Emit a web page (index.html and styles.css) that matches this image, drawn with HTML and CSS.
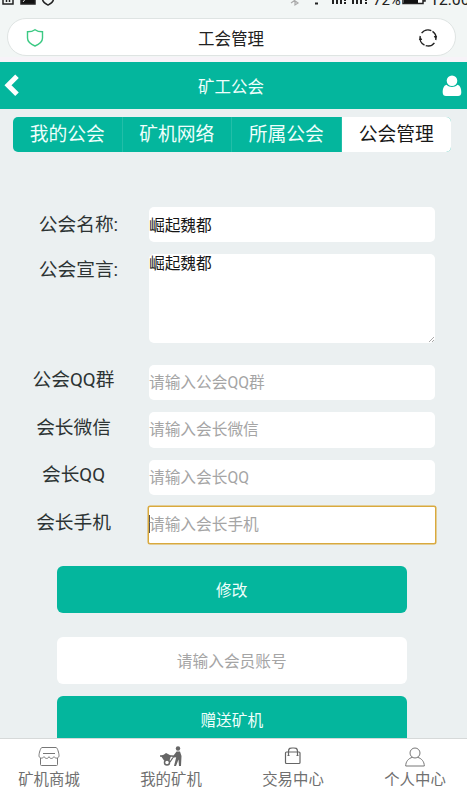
FILE: index.html
```html
<!DOCTYPE html>
<html lang="zh-CN">
<head>
<meta charset="utf-8">
<title>工会管理</title>
<link rel="stylesheet" href="styles.css">
</head>
<body>
<div class="browser">
  <div class="status">
    <svg class="status-left" width="56" height="18" viewBox="0 0 56 18" fill="none" stroke="#222" stroke-width="1.5">
      <path d="M1 3v10h10V3M4.500 5v6M7.500 5v6"/>
      <path d="M19 2h14v11H19z" fill="#111"/>
      <path d="M21 11l4-5 2 3 2-2" stroke="#ddd" stroke-width="1"/>
      <path d="M40.500 4v4c0 3.500 3.500 5 5.500 6 2-1 5.500-2.500 5.500-6V4"/>
    </svg>
    <svg class="status-signal" width="82" height="18" viewBox="0 0 82 18" fill="none" stroke="#222" stroke-width="2">
      <path d="M2 7l7 5-3 2V4M2 12l7-5" stroke="#aaa" stroke-width="1.200"/>
      <path d="M26 12.500h3"/>
      <path d="M44 8v5M48 7v6M52 5v8M56 8v2M56 11v2M64 8v5M68 7v6M72 5v8M77 8v2M77 11v2"/>
    </svg>
    <span class="percent">72%</span>
    <svg class="battery" width="24" height="18" viewBox="0 0 24 18"><path d="M1 3h20v9.500H1zM21 6h2v4h-2" fill="#fff" stroke="#222" stroke-width="1.500"/><path d="M2 3h14v9H2z" fill="#111"/></svg>
    <span class="clock">12:00</span>
  </div>
  <div class="address">
    <svg width="18" height="20" viewBox="0 0 18 20" fill="none" stroke="#3bc983" stroke-width="1.400"><path d="M9 1.700C7 3.200 4.500 3.800 1.500 3.800V10c0 4.200 3.500 6.300 7.500 8 4-1.700 7.500-3.800 7.500-8V3.800C13.500 3.800 11 3.200 9 1.700z"/></svg>
    <span>工会管理</span>
    <svg width="20" height="20" viewBox="0 0 20 20" fill="none" stroke="#222" stroke-width="1.400"><path d="M6.500 17.200A8 8 0 0 1 2.300 8M3.600 5.200A8 8 0 0 1 13.300 2.700M14.500 3.400A8 8 0 0 1 17.700 12M16.400 14.800a8 8 0 0 1-8.700 2.800"/><path d="M.8 12h3.400l-1.500-3zM15.800 8h3.400l-1.800 3z" fill="#222" stroke="none"/></svg>
  </div>
</div>
<header class="header">
  <svg width="16" height="24" viewBox="0 0 16 24" fill="none" stroke="#fff" stroke-width="5"><path d="M13 2.200L4 11.200 13 20.200"/></svg>
  <h1>矿工公会</h1>
  <svg width="20" height="22" viewBox="0 0 20 22" fill="#fff"><circle cx="10" cy="5.800" r="5.300"/><path d="M4.500 9.700C1.500 10.500.7 14 .7 17.500c0 2.500 1.300 3.500 3.300 3.500h12c2 0 3.300-1 3.300-3.500 0-3.500-.8-7-3.800-7.800-3 3-8 3-11 0z"/></svg>
</header>
<main class="content">
  <nav class="tabs">
    <span class="tab">我的公会</span><span class="tab">矿机网络</span><span class="tab">所属公会</span><span class="tab active">公会管理</span>
  </nav>
  <form class="form">
    <div class="row"><span class="label colon">公会名称:</span><div class="field value">崛起魏都</div></div>
    <div class="row tall"><span class="label colon">公会宣言:</span><div class="field value area">崛起魏都<svg class="grip" width="6" height="6" viewBox="0 0 6 6" stroke="#aaa" stroke-width="1"><path d="M0 5l5-5M3 5l2-2"/></svg></div></div>
    <div class="row"><span class="label">公会QQ群</span><div class="field">请输入公会QQ群</div></div>
    <div class="row"><span class="label">会长微信</span><div class="field">请输入会长微信</div></div>
    <div class="row"><span class="label">会长QQ</span><div class="field">请输入会长QQ</div></div>
    <div class="row"><span class="label">会长手机</span><div class="field focused">请输入会长手机</div></div>
  </form>
  <section class="actions">
    <div class="button">修改</div>
    <div class="member">请输入会员账号</div>
    <div class="button">赠送矿机</div>
  </section>
</main>
<footer class="bottom-nav">
  <a class="item"><svg width="22" height="20" viewBox="0 0 22 20" fill="none" stroke="#777" stroke-width="1"><path d="M4 1h14c1.500 0 3 6 3 8 0 3-3.500 3.500-5 1.200-1.500 2.300-4 2.300-5 0-1 2.300-3.500 2.300-5 0C4.500 12.500 1 12 1 9c0-2 1.500-8 3-8zM2.500 11.500V18q0 1 1 1h15q1 0 1-1v-6.500M5 7h12"/></svg><span>矿机商城</span></a>
  <a class="item"><svg width="22" height="21" viewBox="0 0 22 21" fill="#666"><path d="M1 10l3-1.500 2-1.500 3 1.500 2 1.500-1.500 4.500H4z"/><path d="M0 10h12l6 1M10 16l3-4.500" fill="none" stroke="#666" stroke-width="1.300"/><circle cx="7" cy="16.500" r="2.500" fill="#fff" stroke="#666" stroke-width="1.500"/><circle cx="18" cy="2.500" r="2.200"/><path d="M16.500 5.500h3.500l1.500 4.500-.5 10h-2l-.5-6.500-2.500 6.500h-2l2-8 .5-2-3 2-.8-1.300z"/></svg><span>我的矿机</span></a>
  <a class="item"><svg width="18" height="21" viewBox="0 -1 18 21" fill="none" stroke="#666" stroke-width="1.200"><rect x="1.500" y="5" width="14.500" height="11.500" rx="1"/><path d="M4.500 8.500V4.500C4.500.5 7 1 9 1s4.500-.5 4.500 3.500v4M3.500 8.500h2M12.500 8.500h2"/></svg><span>交易中心</span></a>
  <a class="item"><svg width="20" height="21" viewBox="0 -1 20 21" fill="none" stroke="#777" stroke-width="1"><circle cx="10" cy="6" r="5"/><path d="M7.500 10.300C3.500 11.300.7 14.500.7 19h18.600c0-4.500-2.800-7.700-6.800-8.700"/></svg><span>个人中心</span></a>
</footer>
</body>
</html>
```

FILE: styles.css
```css
* { box-sizing: border-box; }
body {
  margin: 0;
  height: 794px;
  overflow: hidden;
  display: flex;
  flex-direction: column;
  background: #ebf0f1;
  font-family: Roboto, "Noto Sans CJK SC", sans-serif;
  font-weight: 400;
  color: #2c3333;
}
svg { display: block; flex: none; }
.browser {
  flex: none;
  height: 62px;
  overflow: hidden;
  background: linear-gradient(#f2f6f5 57px, #f7f3f8 57px);
}
.status {
  display: flex;
  align-items: center;
  height: 18px;
  margin-top: -9px;
  padding-left: 2px;
  color: #222;
  font-size: 16px;
  line-height: 18px;
  white-space: nowrap;
}
.status-signal { margin-left: 231px; }
.percent { width: 29px; margin-left: 2px; font-size: 15px; }
.battery { margin-left: 1px; }
.clock { margin-left: 4px; }
.address {
  display: flex;
  align-items: center;
  justify-content: space-between;
  width: 449px;
  height: 38px;
  margin: 9px 0 0 7px;
  padding: 2px 17px 0 18px;
  border: 1px solid #dfe4e3;
  border-radius: 19px;
  background: #fff;
  color: #222;
  font-size: 16.5px;
}
.header {
  flex: none;
  display: flex;
  align-items: center;
  justify-content: space-between;
  height: 47px;
  padding: 0 5px 0 4px;
  background: #04b69d;
  color: #effffc;
}
.header h1 { margin: 0; font-size: 16.5px; font-weight: inherit; }
.content { flex: 1; min-height: 0; overflow: hidden; padding-top: 8px; }
.tabs {
  display: grid;
  grid-template-columns: repeat(4, 1fr);
  width: 438px;
  height: 35px;
  margin-left: 13px;
  border-radius: 5px;
  overflow: hidden;
  background: #04b69d;
}
.tab {
  display: flex;
  align-items: center;
  justify-content: center;
  padding-bottom: 4px;
  border-right: 1px solid #22bea8;
  color: #effffc;
  font-size: 18.8px;
}
.tab.active { border: 0; background: #fff; color: #181818; }
.form {
  display: flex;
  flex-direction: column;
  gap: 12px;
  margin: 55px 32.500px 0 0;
}
.row { display: grid; grid-template-columns: 149px 1fr; height: 35.500px; }
.row:first-child { height: 35px; }
.row.tall { height: 89px; margin-bottom: 9.500px; }
.label {
  display: flex;
  align-items: center;
  justify-content: center;
  height: 26px;
  padding-right: 2px;
  font-size: 18.7px;
}
.label.colon { padding-left: 8px; height: 27px; padding-right: 0; }
.row:first-child .label { height: 31px; }
.field {
  position: relative;
  display: flex;
  align-items: center;
  padding-bottom: 2px;
  border-radius: 5px;
  background: #fff;
  color: #a5a5a5;
  font-size: 15.7px;
}
.field.value { color: #151515; padding-bottom: 0; }
.field.area { align-items: flex-start; padding-top: 1px; line-height: 18px; }
.grip { position: absolute; right: 0; bottom: 0; }
.focused {
  margin: -1px;
  border: 1.500px solid #d9a93d;
  border-radius: 2px;
  box-shadow: 0 0 0 .5px #d9a93d;
}
.focused::before {
  content: "";
  width: 1px;
  height: 18px;
  margin-right: -1px;
  background: #555;
}
.actions { display: flex; flex-direction: column; width: 350.500px; margin: 23.500px 0 0 56.500px; }
.button, .member {
  display: flex;
  flex: none;
  align-items: center;
  justify-content: center;
  height: 47.200px;
  border-radius: 6px;
  font-size: 15.7px;
}
.button { background: #04b69d; color: #effffc; }
.member { margin: 23.800px 0 12px; padding-bottom: 1px; background: #fff; color: #a5a5a5; }
.bottom-nav {
  flex: none;
  display: grid;
  grid-template-columns: repeat(4, 122px);
  height: 56px;
  margin-left: -12px;
  border-top: 1px solid #d6d9d9;
  background: #fff;
  color: #707070;
  font-size: 15.4px;
}
.item {
  display: flex;
  flex-direction: column;
  align-items: center;
  padding-top: 7px;
  line-height: 22px;
}
.item svg { height: 21px; margin-bottom: 2px; }
```
